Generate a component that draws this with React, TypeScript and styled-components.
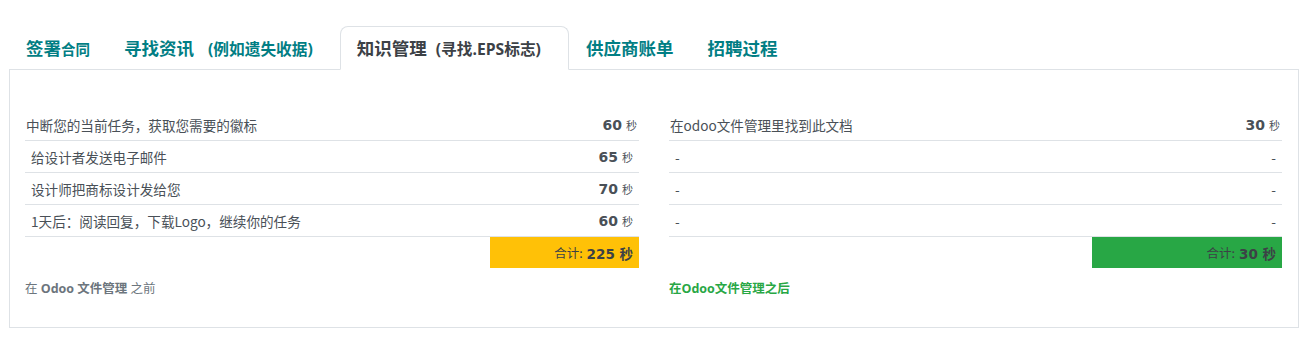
import React from 'react';
import styled, { createGlobalStyle } from 'styled-components';

const GlobalStyle = createGlobalStyle`
  body {
    margin: 0;
    background: #fff;
    font-family: "Open Sans", "Noto Sans CJK SC", sans-serif;
    color: #495057;
  }
`;

interface Step {
  label: string;
  seconds?: number;
}

const before: Step[] = [
  { label: '中断您的当前任务，获取您需要的徽标', seconds: 60 },
  { label: '给设计者发送电子邮件', seconds: 65 },
  { label: '设计师把商标设计发给您', seconds: 70 },
  { label: '1天后：阅读回复，下载Logo，继续你的任务', seconds: 60 },
];

const after: Step[] = [
  { label: '在odoo文件管理里找到此文档', seconds: 30 },
  { label: '-' },
  { label: '-' },
  { label: '-' },
];

const Page = styled.div`
  width: 1290px;
  padding: 26px 0 0 9px;
`;

const Nav = styled.div`
  display: flex;
  height: 43px;
  border-bottom: 1px solid #dee2e6;
`;

const Tab = styled.div<{ active?: boolean }>`
  display: flex;
  align-items: baseline;
  padding: 8px 16px 0;
  font-family: "Noto Sans CJK SC", sans-serif;
  font-size: 17.5px;
  font-weight: 700;
  color: ${ props => (props.active ? '#3c4146' : '#017e84') };
  background: ${ props => (props.active ? '#fff' : 'transparent') };
  border: 1px solid ${ props => (props.active ? '#dee2e6' : 'transparent') };
  border-bottom-color: ${ props => (props.active ? '#fff' : 'transparent') };
  border-radius: 8px 8px 0 0;
  margin-bottom: -1px;
  white-space: nowrap;
`;

const TabNote = styled.span<{ size: number; gap?: number; trail?: number }>`
  font-family: "Open Sans", "Noto Sans CJK SC", sans-serif;
  font-size: ${ props => props.size }px;
  margin-left: ${ props => props.gap || 0 }px;
  margin-right: ${ props => props.trail || 0 }px;
`;

const Panel = styled.div`
  border: 1px solid #dee2e6;
  border-top: none;
  padding: 39px 16px 30px 15px;
`;

const Columns = styled.div`
  display: grid;
  grid-template-columns: 614px 613px;
  column-gap: 30px;
`;

const Column = styled.div`
  display: flex;
  flex-direction: column;
`;

const Row = styled.div<{ first?: boolean }>`
  display: flex;
  align-items: center;
  justify-content: space-between;
  height: 31px;
  border-bottom: 1px solid #dee2e6;
  padding: ${ props => (props.first ? '0 2px 0 1px' : '0 6px') };
  font-family: "Noto Sans CJK SC", sans-serif;
  font-size: 13.6px;
  color: #495057;
`;

const Value = styled.span`
  font-family: "DejaVu Sans", sans-serif;
  font-size: 14px;
  font-weight: 700;
  color: #495057;
`;

const Unit = styled.span`
  font-family: "Noto Sans CJK SC", sans-serif;
  font-size: 11px;
  font-weight: 400;
  margin-left: 4px;
`;

const TotalLine = styled.div`
  display: flex;
  justify-content: flex-end;
`;

const Total = styled.div<{ color: string; width: number }>`
  display: flex;
  align-items: center;
  justify-content: flex-end;
  width: ${ props => props.width }px;
  height: 31px;
  padding-right: 6px;
  box-sizing: border-box;
  background: ${ props => props.color };
  color: #3c4146;
  font-family: "Noto Sans CJK SC", sans-serif;
  font-size: 12.5px;
`;

const TotalNumber = styled.b`
  font-family: "DejaVu Sans", "Noto Sans CJK SC", sans-serif;
  font-size: 13.5px;
  margin-left: 4px;
`;

const Note = styled.div<{ color: string; strong?: boolean }>`
  margin-top: 13px;
  font-size: 12.5px;
  line-height: 16px;
  color: ${ props => props.color };
  font-weight: ${ props => (props.strong ? 700 : 400) };

  b {
    font-weight: 700;
  }
`;

const StepRows: React.FC<{ steps: Step[] }> = ({ steps }) => (
  <>
    {steps.map((step, i) => (
      <Row key={i} first={i === 0}>
        <span>{step.label}</span>
        {step.seconds ? (
          <Value>
            {step.seconds}
            <Unit>秒</Unit>
          </Value>
        ) : (
          <span>-</span>
        )}
      </Row>
    ))}
  </>
);

const App: React.FC = () => (
  <Page>
    <GlobalStyle />
    <Nav>
      <Tab>
        签署<TabNote size={14.5}>合同</TabNote>
      </Tab>
      <Tab>
        寻找资讯<TabNote size={15.7} gap={14} trail={10}>(例如遗失收据)</TabNote>
      </Tab>
      <Tab active>
        知识管理<TabNote size={15.7} gap={9} trail={11}>(寻找.EPS标志)</TabNote>
      </Tab>
      <Tab>供应商账单</Tab>
      <Tab>招聘过程</Tab>
    </Nav>
    <Panel>
      <Columns>
        <Column>
          <StepRows steps={before} />
          <TotalLine>
            <Total color="#ffc107" width={149}>
              合计:<TotalNumber>225 秒</TotalNumber>
            </Total>
          </TotalLine>
          <Note color="#6c757d">
            在 <b>Odoo</b> <b>文件管理</b> 之前
          </Note>
        </Column>
        <Column>
          <StepRows steps={after} />
          <TotalLine>
            <Total color="#28a745" width={190}>
              合计:<TotalNumber>30 秒</TotalNumber>
            </Total>
          </TotalLine>
          <Note color="#28a745" strong>
            在Odoo文件管理之后
          </Note>
        </Column>
      </Columns>
    </Panel>
  </Page>
);

export default App;
